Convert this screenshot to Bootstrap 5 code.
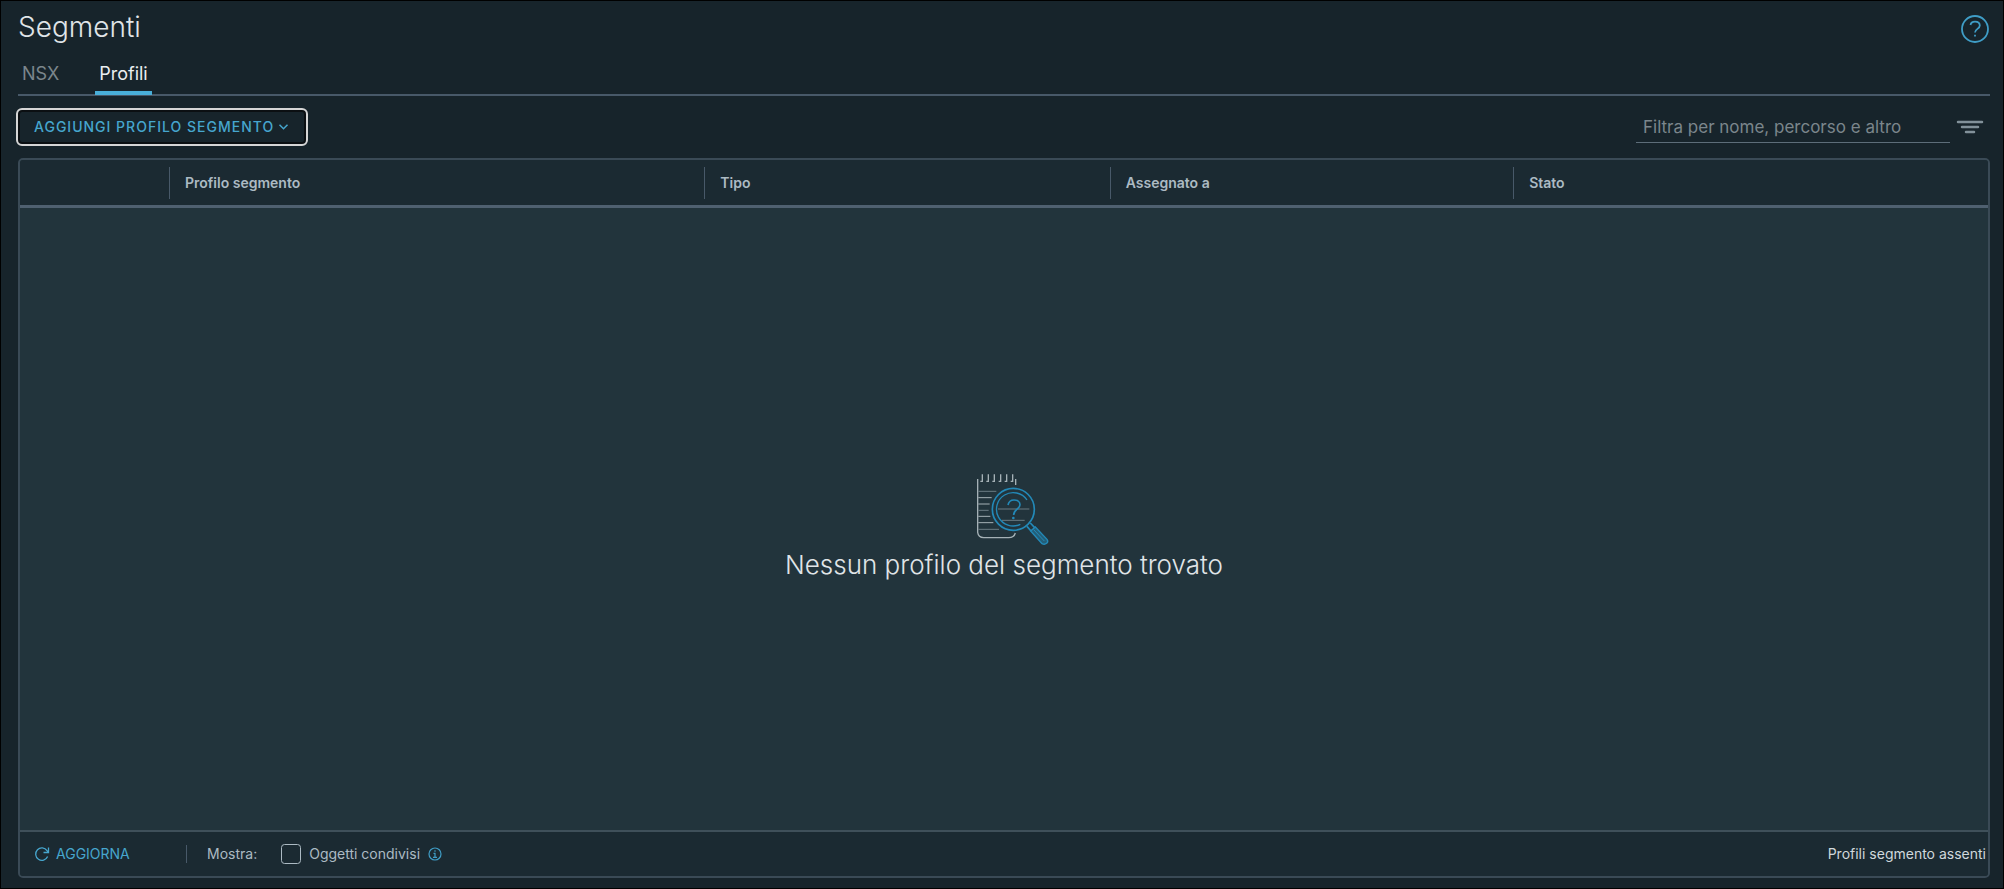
<!DOCTYPE html>
<html lang="it">
<head>
<meta charset="utf-8">
<meta name="viewport" content="width=device-width, initial-scale=1">
<title>Segmenti</title>
<link rel="stylesheet" href="https://cdn.jsdelivr.net/npm/bootstrap@5.3.0/dist/css/bootstrap.min.css">
<style>
  :root { --accent: #49afd9; --line: #485969; --page: #17242b; --panel: #1b2a32; --sheet: #22343c; }
  body { background: var(--page); color: #acbac3; font-family: Inter, "Open Sans", sans-serif; font-size: 14px; line-height: 20px; }
  .shell { border: 1px solid #000; padding: 8px 13px 10px 17px; }
  .page-title { font-size: 28px; line-height: 36px; font-weight: 300; color: #e0e5e8; }
  .help-btn, .filter-btn { line-height: 0; }
  .tabs { border-bottom: 2px solid var(--line); height: 51px; }
  .tabs .nav-link { color: #7b868c; font-size: 18px; line-height: 24px; padding: 17px 4px 0; height: 50px; border-bottom: 4px solid transparent; }
  .tabs .nav-link.active { color: #eaeef0; border-color: var(--accent); }
  .toolbar { padding: 14px 0; }
  .add-btn { color: #46a6ce; font-size: 14px; line-height: 20px; font-weight: 500; letter-spacing: 1px; text-transform: uppercase; border: 2px solid #0b0f12; border-radius: 4px; outline: 2px solid #d5d5d5; padding: 5px 14px; }
  .add-btn:hover { color: #79c6e6; border-color: #0b0f12; }
  .filter-box { background: transparent; color: #acbac3; border: 0; border-bottom: 1px solid #5d6d79; border-radius: 0; width: 314px; padding: 3px 7px; font-size: 17px; line-height: 24px; }
  .filter-box:focus { background: transparent; color: #e0e5e8; box-shadow: none; }
  .filter-box::placeholder { color: #7b868c; opacity: 1; }
  .datagrid { background: var(--sheet); border: 2px solid #3a4a56; border-radius: 5px; overflow: hidden; }
  .grid-head { table-layout: fixed; background: var(--panel); border-bottom: 3px solid #4f6070; }
  .grid-head th { padding: 7px 0 6px; font-weight: 600; }
  .grid-head .cell { line-height: 32px; padding-left: 15px; border-left: 1px solid var(--line); }
  .col-tools { width: 149px; } .col-name { width: 27.2%; } .col-type { width: 20.6%; } .col-used { width: 20.5%; }
  .empty-art { margin-left: 18px; }
  .empty-note { font-size: 26px; line-height: 34px; font-weight: 300; color: #e0e5e8; }
  .grid-foot { background: var(--panel); border-top: 2px solid #3f505a; height: 46px; padding: 0 2px 0 14px; }
  .foot-sep { border-left: 1px solid var(--line); height: 18px; }
  .refresh-btn { color: #46a6ce; font-size: 14px; line-height: 20px; width: 152px; gap: 6px; }
  .shared-check { width: 20px; height: 20px; border: 1px solid #acbac3; border-radius: 4px; background-color: transparent; }
  .foot-total { color: #d0d8dc; }
</style>
</head>
<body>
<main class="shell d-flex flex-column min-vh-100">
  <header class="d-flex justify-content-between align-items-start">
    <h1 class="page-title mb-0">Segmenti</h1>
    <button class="help-btn btn p-0 border-0 mt-1" type="button" aria-label="Guida">
      <svg width="30" height="30" viewBox="0 0 30 30" fill="none" stroke="#3f9dc6" stroke-width="1.8"><circle cx="15" cy="16" r="13"/><path d="M10.500 12C10.800 10 12.500 8.700 15 8.700c3 0 4.800 1.500 4.800 3.800 0 3.500-4.800 3.300-4.800 7"/><path d="M15 21.700v1.800"/></svg>
    </button>
  </header>

  <nav class="tabs nav flex-nowrap" aria-label="Segmenti">
    <a class="nav-link me-4" href="#nsx">NSX</a>
    <a class="nav-link active ms-2" href="#profili" aria-current="page">Profili</a>
  </nav>

  <div class="toolbar d-flex justify-content-between align-items-center">
    <button class="add-btn btn d-flex align-items-center gap-1" type="button">Aggiungi profilo segmento
      <svg width="12" height="12" viewBox="0 0 12 12" fill="none" stroke="currentColor" stroke-width="1.500"><path d="M1.500 3.700 5.500 7.700l4-4"/></svg>
    </button>
    <div class="d-flex align-items-center gap-1">
      <input class="filter-box form-control" type="text" placeholder="Filtra per nome, percorso e altro" aria-label="Filtra per nome, percorso e altro">
      <button class="filter-btn btn p-0 border-0 me-1" type="button" aria-label="Filtri">
        <svg width="32" height="16" viewBox="0 0 32 16" stroke="#82919a" stroke-width="2.500" stroke-linecap="round"><path d="M4 3h24M8 8h16M12 13h8"/></svg>
      </button>
    </div>
  </div>

  <section class="datagrid d-flex flex-column flex-grow-1">
    <table class="grid-head w-100">
      <thead>
        <tr>
          <th class="col-tools" aria-label="Azioni"></th>
          <th class="col-name" scope="col"><div class="cell">Profilo segmento</div></th>
          <th class="col-type" scope="col"><div class="cell">Tipo</div></th>
          <th class="col-used" scope="col"><div class="cell">Assegnato a</div></th>
          <th scope="col"><div class="cell">Stato</div></th>
        </tr>
      </thead>
    </table>

    <div class="flex-grow-1 d-flex flex-column align-items-center justify-content-center pt-3">
      <svg class="empty-art" width="76" height="76" viewBox="105 66 228 228" fill="none" stroke-width="4" aria-hidden="true">
        <g stroke="#a5b1b6">
          <path d="M113 87v160q2 15 18 16h75q16 0 20-14M227 87v18"/>
          <path d="M127 73v21h-6M145 73v21h-6M163 73v21h-6M182 73v21h-6M200 73v21h-6M218 73v21h-6"/>
          <path stroke-width="3" d="M115 143h40M115 162h34M115 199h36M115 218h45"/>
          <path stroke="#6a7b82" stroke-width="3" d="M115 124h54M115 181h31M115 238h62M174 177h94M186 211h68"/>
        </g>
        <g stroke="#2389b8">
          <circle cx="220" cy="178" r="63" stroke-width="5"/>
          <path d="M261 150a50 50 0 1 0-20 73"/>
          <path d="M204 165c2-10 9-15 18-15 11 0 18 6 18 14 0 14-19 13-19 31" stroke-width="5"/>
          <circle cx="220" cy="204" r="2"/>
          <path d="M261 229l12 14M271 219l13 14" stroke-width="5"/>
          <path d="M272 243l14-12 35 37q5 7-1 12t-14 1z" fill="#235f79"/>
          <path d="M281 239l32 34" stroke-width="3"/>
        </g>
      </svg>
      <p class="empty-note mb-0">Nessun profilo del segmento trovato</p>
    </div>

    <footer class="grid-foot d-flex align-items-center">
      <button class="refresh-btn btn p-0 border-0 d-flex align-items-center" type="button">
        <svg width="16" height="16" viewBox="0 0 16 16" fill="none" stroke="currentColor" stroke-width="1.300"><path d="M13.600 10.500A6.200 6.200 0 1 1 13 4.600L14.300 6.200M14.500 1.500v5h-5"/></svg>AGGIORNA
      </button>
      <span class="foot-sep"></span>
      <span class="ms-3 ps-1 me-4">Mostra:</span>
      <input class="shared-check form-check-input m-0" type="checkbox" id="shared">
      <label class="mx-2" for="shared">Oggetti condivisi</label>
      <svg width="14" height="14" viewBox="0 0 14 14" fill="none" stroke="#3f9dc6" stroke-width="1.200"><circle cx="7" cy="7" r="6"/><path d="M7 3.200v1.500M5.500 6.300H7v4M5 10.400h4"/></svg>
      <span class="foot-total ms-auto">Profili segmento assenti</span>
    </footer>
  </section>
</main>
<script src="https://cdn.jsdelivr.net/npm/bootstrap@5.3.0/dist/js/bootstrap.bundle.min.js"></script>
</body>
</html>
